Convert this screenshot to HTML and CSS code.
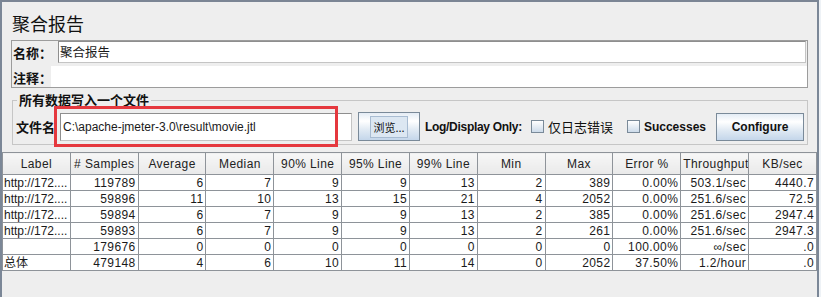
FILE: index.html
```html
<!DOCTYPE HTML>
<html>
  <head>
  <meta charset="utf-8" />
  <link rel="stylesheet" href="styles.css">
  </head>
  <body>
	  <div class="window">
		  <div class="title">聚合报告</div>

		  <div class="namebox">
			  <div class="namerow">
				  <span class="lbl name-lbl">名称：</span>
				  <div class="field name-field">聚合报告</div>
			  </div>
			  <div class="namerow comment-row">
				  <span class="lbl comment-lbl">注释：</span>
				  <div class="field comment-field"></div>
			  </div>
		  </div>

		  <fieldset class="filebox">
			  <legend>所有数据写入一个文件</legend>
			  <div class="filerow">
				  <span class="lbl file-lbl">文件名</span>
				  <div class="field file-field">C:\apache-jmeter-3.0\result\movie.jtl</div>
				  <button class="btn browse"><span class="focus">浏览...</span></button>
				  <span class="logonly">Log/Display Only:</span>
				  <label class="check errors"><span class="box"></span>仅日志错误</label>
				  <label class="check successes"><span class="box"></span>Successes</label>
				  <button class="btn configure">Configure</button>
			  </div>
		  </fieldset>

		  <table class="report">
			  <thead>
				  <tr>
					  <th>Label</th><th># Samples</th><th>Average</th><th>Median</th>
					  <th>90% Line</th><th>95% Line</th><th>99% Line</th><th>Min</th>
					  <th>Max</th><th>Error %</th><th>Throughput</th><th>KB/sec</th>
				  </tr>
			  </thead>
			  <tbody>
				  <tr><td>http://172....</td><td>119789</td><td>6</td><td>7</td><td>9</td><td>9</td><td>13</td><td>2</td><td>389</td><td>0.00%</td><td>503.1/sec</td><td>4440.7</td></tr>
				  <tr><td>http://172....</td><td>59896</td><td>11</td><td>10</td><td>13</td><td>15</td><td>21</td><td>4</td><td>2052</td><td>0.00%</td><td>251.6/sec</td><td>72.5</td></tr>
				  <tr><td>http://172....</td><td>59894</td><td>6</td><td>7</td><td>9</td><td>9</td><td>13</td><td>2</td><td>385</td><td>0.00%</td><td>251.6/sec</td><td>2947.4</td></tr>
				  <tr><td>http://172....</td><td>59893</td><td>6</td><td>7</td><td>9</td><td>9</td><td>13</td><td>2</td><td>261</td><td>0.00%</td><td>251.6/sec</td><td>2947.3</td></tr>
				  <tr><td></td><td>179676</td><td>0</td><td>0</td><td>0</td><td>0</td><td>0</td><td>0</td><td>0</td><td>100.00%</td><td>∞/sec</td><td>.0</td></tr>
				  <tr><td>总体</td><td>479148</td><td>4</td><td>6</td><td>10</td><td>11</td><td>14</td><td>0</td><td>2052</td><td>37.50%</td><td>1.2/hour</td><td>.0</td></tr>
			  </tbody>
		  </table>

		  <!-- annotation drawn over the file field -->
		  <div class="mark"></div>
	  </div>
  </body>
</html>
```

FILE: styles.css
```css
html, body {
    margin: 0;
    padding: 0;
    background: #eef2f6;
}
body {
    font-family: "Liberation Sans", "Noto Sans CJK SC", sans-serif;
    color: #1a1a1a;
}

.window {
    position: relative;
    box-sizing: border-box;
    width: 819px;
    height: 297px;
    background: #eeeeee;
    border-top: 2px solid #7b8594;
    border-left: 2px solid #7b8797;
    border-right: 2px solid #7b8797;
}

.title {
    height: 38px;
    box-sizing: border-box;
    padding: 4px 0 0 10px;
    font-family: "Noto Sans CJK SC", sans-serif;
    font-size: 18px;
    line-height: 34px;
    color: #111;
}

.lbl {
    font-family: "Noto Sans CJK SC", sans-serif;
    font-weight: bold;
    font-size: 13px;
    color: #111;
    white-space: nowrap;
}

/* name / comment panel */
.namebox {
    box-sizing: border-box;
    width: 797px;
    height: 48px;
    margin-left: 9px;
    border: 1px solid #9c9c9c;
    background: #eeeeee;
}
.namerow {
    display: flex;
    align-items: center;
}
.namerow .lbl {
    padding-left: 1px;
}
.name-lbl { width: 45px; }
.comment-lbl { width: 38px; }

.field {
    box-sizing: border-box;
    background: #fff;
    white-space: nowrap;
    overflow: hidden;
}
.name-field {
    flex: 1;
    height: 22px;
    margin-right: 1px;
    border: 1px solid #8e8e8e;
    border-right-color: #c4c4c4;
    border-bottom-color: #c4c4c4;
    padding-left: 1px;
    font-family: "Noto Sans CJK SC", sans-serif;
    font-size: 12.5px;
    line-height: 20px;
}
.comment-row {
    margin-top: 3px;
}
.comment-row .lbl {
    padding-top: 2px;
}
.comment-field {
    flex: 1;
    height: 21px;
}

/* file panel */
.filebox {
    box-sizing: border-box;
    width: 796px;
    margin: 5px 0 0 10px;
    padding: 0 0 2px 3px;
    border: 1px solid #c6c6c6;
    min-width: 0;
}
.filebox legend {
    padding: 0 2px;
    margin-left: 1px;
    font-family: "Noto Sans CJK SC", sans-serif;
    font-weight: bold;
    font-size: 13px;
    line-height: 14px;
    color: #111;
}
.filerow {
    display: flex;
    align-items: center;
    height: 31px;
    margin-top: 4px;
}
.file-lbl {
    width: 44px;
}
.file-field {
    width: 292px;
    height: 28px;
    border: 1px solid #8e8e8e;
    border-right-color: #c4c4c4;
    border-bottom-color: #c4c4c4;
    padding-left: 2px;
    font-size: 12px;
    line-height: 26px;
}

.btn {
    box-sizing: border-box;
    height: 29px;
    padding: 0;
    border: 1px solid #7a8a99;
    border-radius: 0;
    background: linear-gradient(#e4ecf5 0%, #ffffff 30%, #e2ebf4 60%, #c4d6ea 100%);
    color: #111;
    font-family: "Liberation Sans", sans-serif;
}
.browse {
    width: 62px;
    margin-left: 6px;
    font-family: "Noto Sans CJK SC", sans-serif;
    font-size: 11px;
}
.browse .focus {
    display: inline-block;
    padding: 3px 2px;
    line-height: 14px;
    border: 1px solid #a8bcd2;
    background: #dce7f2;
}
.configure {
    width: 88px;
    height: 28px;
    margin-left: 10px;
    font-weight: bold;
    font-size: 12px;
}

.logonly {
    margin-left: 5px;
    font-weight: bold;
    font-size: 12px;
    letter-spacing: -0.3px;
    white-space: nowrap;
    color: #111;
}
.check {
    display: flex;
    align-items: center;
    font-size: 13px;
    white-space: nowrap;
    color: #111;
}
.check .box {
    box-sizing: border-box;
    width: 13px;
    height: 13px;
    margin-right: 4px;
    border: 1px solid #7a8a99;
    background: linear-gradient(#ffffff, #cddbea);
}
.errors {
    margin-left: 9px;
    font-family: "Noto Sans CJK SC", sans-serif;
}
.successes {
    margin-left: 14px;
    font-weight: bold;
    font-size: 12px;
}

/* aggregate table */
.report {
    width: 815px;
    margin-top: 7px;
    border-collapse: collapse;
    table-layout: fixed;
    background: #fff;
    font-size: 12px;
    letter-spacing: 0.4px;
}
.report th, .report td {
    border: 1px solid #8e9399;
    padding: 0 2px;
    white-space: nowrap;
    overflow: hidden;
}
.report th {
    height: 21px;
    font-weight: normal;
    text-align: center;
    color: #222;
    background: linear-gradient(#f7f7f7, #e9e9e9);
}
.report td {
    height: 15px;
    line-height: 14px;
    text-align: right;
    color: #1a1a1a;
}
.report td:first-child {
    text-align: left;
    padding: 0 0 0 1px;
    letter-spacing: 0;
}

.mark {
    position: absolute;
    left: 52px;
    top: 104px;
    width: 284px;
    height: 41px;
    box-sizing: border-box;
    border: 3px solid #e5383e;
    pointer-events: none;
}
```
